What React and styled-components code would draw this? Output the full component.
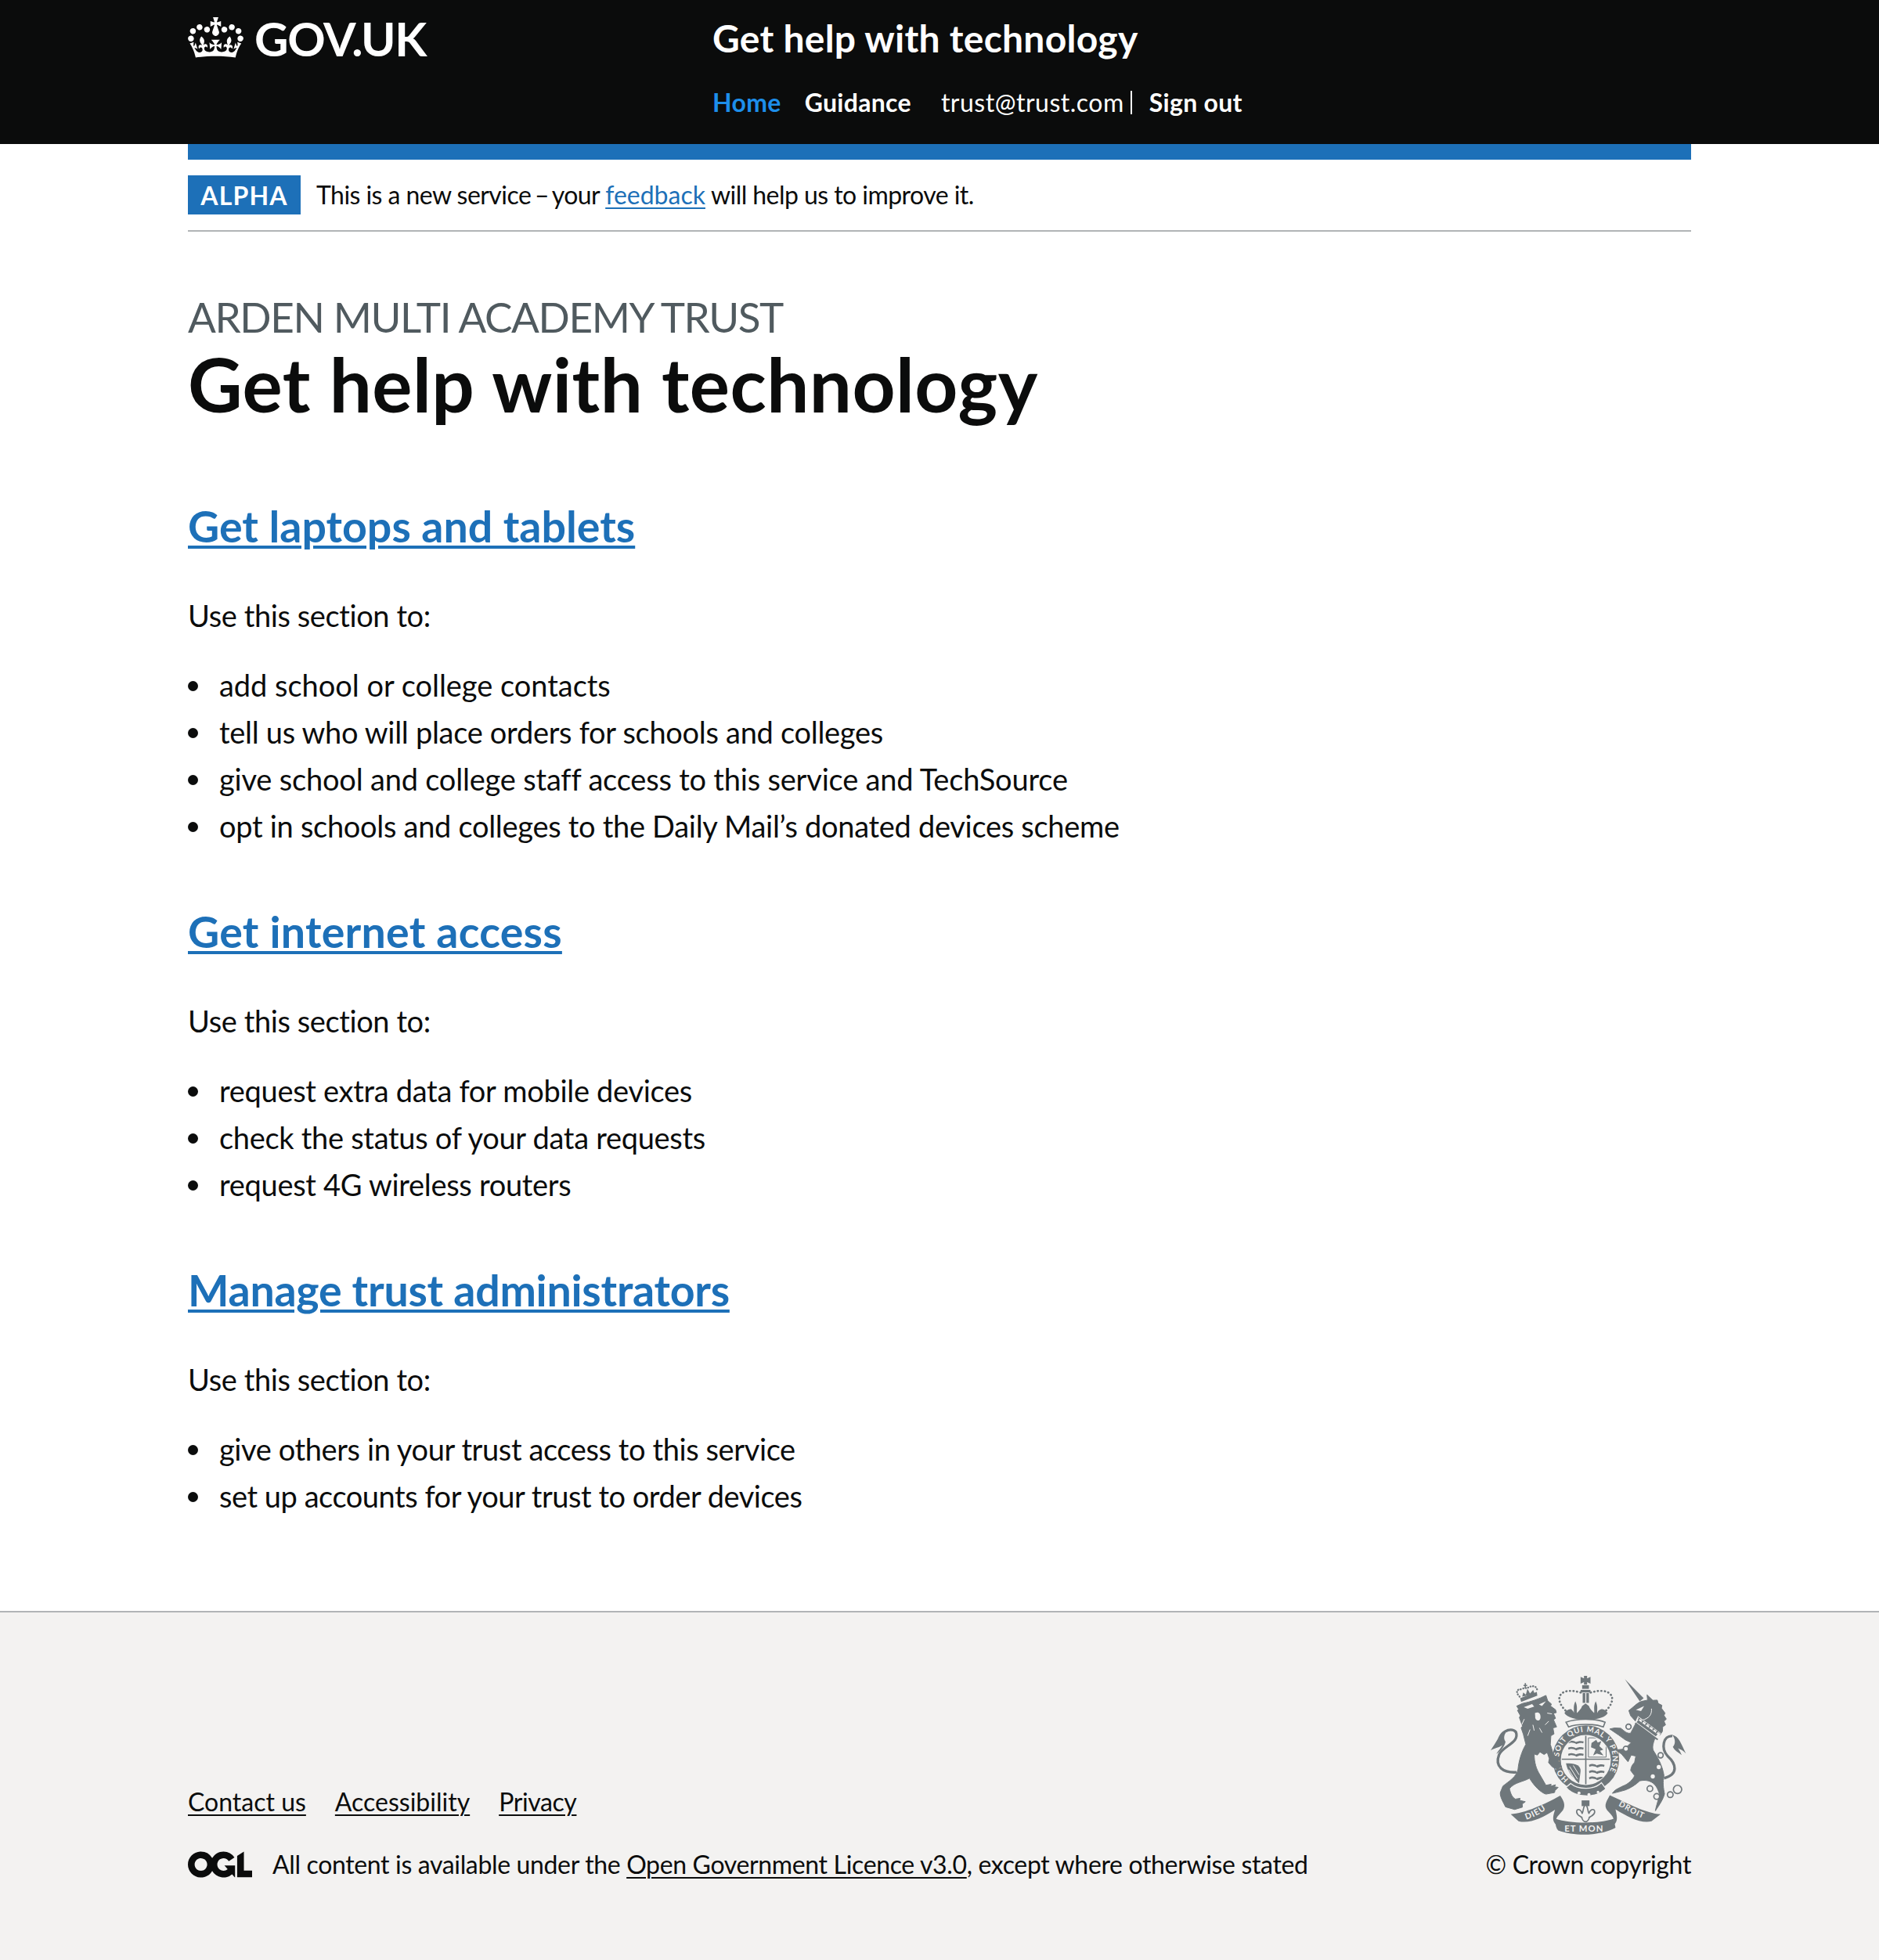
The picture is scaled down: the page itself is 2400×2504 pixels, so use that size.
import React from "react";
import styled, { createGlobalStyle } from "styled-components";

const FONT = `Lato, "Noto Sans", Arial, sans-serif`;

const Global = createGlobalStyle`
  html, body { margin: 0; padding: 0; background: #fff; }
  body { font-family: ${FONT}; color: #0b0c0c; }
`;

const Page = styled.div`
  width: 2400px;
  height: 2504px;
  display: flex;
  flex-direction: column;
`;
const Width = styled.div`
  width: 1920px;
  margin: 0 auto;
`;
const Header = styled.header`
  background: #0b0c0c;
  height: 184px;
  color: #fff;
`;
const HeaderInner = styled(Width)`
  display: flex;
`;
const Logo = styled.div`
  width: 670px;
  display: flex;
  align-items: flex-start;
  gap: 14px;
  padding-top: 22px;
`;
const LogoText = styled.span`
  font-size: 60px;
  font-weight: 700;
  line-height: 54px;
  letter-spacing: -1.3px;
`;
const HeaderRight = styled.div`
  display: flex;
  flex-direction: column;
`;
const ServiceName = styled.div`
  font-size: 48px;
  font-weight: 700;
  line-height: 60px;
  margin-top: 19px;
  letter-spacing: 0.25px;
`;
const Nav = styled.nav`
  display: flex;
  align-items: center;
  margin-top: 32px;
  font-size: 32px;
  line-height: 40px;
`;
const NavLink = styled.a`
  font-weight: 700;
  letter-spacing: 0.3px;
  color: ${(p) => (p.$active ? "#1d8feb" : "#fff")};
  margin-right: ${(p) => p.$mr || 0}px;
`;
const NavUser = styled.span`
  font-weight: 400;
  letter-spacing: 0.5px;
  padding-right: 8px;
  margin-right: 22px;
  border-right: 2px solid #fff;
  line-height: 30px;
`;
const Phase = styled(Width)`
  border-top: 20px solid #1d70b8;
  border-bottom: 2px solid #b1b4b6;
  padding: 20px 0;
  height: 50px;
  display: flex;
  align-items: center;
  gap: 20px;
`;
const Tag = styled.strong`
  background: #1d70b8;
  color: #fff;
  font-size: 32px;
  font-weight: 700;
  letter-spacing: 1.2px;
  width: 144px;
  height: 50px;
  display: flex;
  align-items: center;
  justify-content: center;
`;
const PhaseText = styled.span`
  font-size: 32px;
  line-height: 40px;
  letter-spacing: -0.55px;
`;
const Dash = styled.span`
  margin: 0 -3px;
`;
const Link = styled.a`
  color: #1d70b8;
  letter-spacing: 0;
  text-decoration: underline;
  text-decoration-thickness: 2px;
  text-underline-offset: 4px;
`;
const Main = styled(Width)`
  padding-top: 77px;
  flex: 1;
`;
const Caption = styled.div`
  font-size: 53px;
  line-height: 64px;
  margin-bottom: 3px;
  color: #505a5f;
  letter-spacing: -1.4px;
`;
const H1 = styled.h1`
  margin: 0 0 102px;
  font-size: 96px;
  line-height: 100px;
  font-weight: 700;
  letter-spacing: 0.45px;
`;
const H2 = styled.h2`
  margin: 0 0 59px;
  font-size: 55.5px;
  line-height: 60px;
  font-weight: 700;
  letter-spacing: ${(p) => p.$ls || 0}px;
`;
const H2Link = styled.a`
  color: #1d70b8;
  text-decoration: underline;
  text-decoration-thickness: 4px;
  text-underline-offset: 4px;
`;
const P = styled.p`
  margin: 0 0 39px;
  font-size: 38px;
  line-height: 50px;
  letter-spacing: -0.4px;
`;
const List = styled.ul`
  list-style: none;
  margin: 0 0 80px;
  padding: 0 0 0 40px;
  font-size: 38px;
  line-height: 50px;
`;
const Item = styled.li`
  display: flex;
  align-items: center;
  margin-bottom: 10px;
  letter-spacing: ${(p) => p.$ls}px;
  &::before {
    content: "";
    flex: none;
    width: 13px;
    height: 13px;
    border-radius: 50%;
    background: #0b0c0c;
    margin: 2px 27px 0 -40px;
  }
`;
const Footer = styled.footer`
  background: #f3f2f1;
  border-top: 2px solid #b1b4b6;
  height: 444px;
`;
const FooterInner = styled(Width)`
  display: flex;
  justify-content: space-between;
  align-items: flex-end;
  padding-top: 80px;
`;
const FooterMeta = styled.div`
  font-size: 32px;
  line-height: 40px;
`;
const FooterLinks = styled.div`
  display: flex;
  gap: 37px;
  margin-bottom: 40px;
`;
const FooterLink = styled.a`
  color: #0b0c0c;
  letter-spacing: ${(p) => p.$ls || 0}px;
  text-decoration: underline;
  text-decoration-thickness: 2px;
  text-underline-offset: 4px;
`;
const Licence = styled.div`
  display: flex;
  align-items: center;
  gap: 26px;
  letter-spacing: -0.35px;
`;
const CrownCol = styled.div`
  display: flex;
  flex-direction: column;
  align-items: flex-end;
  font-size: 32px;
  line-height: 40px;
  letter-spacing: -0.35px;
`;
const Crest = styled.svg`
  display: block;
  margin: 0 4px 15px 0;
`;

const CrownLogo = () => (
  <svg width="71" height="52" viewBox="0 0 132 97" aria-hidden="true">
    <path
      fill="#fff"
      fillRule="evenodd"
      d="M25 30.2c3.5 1.5 7.7-.2 9.1-3.7 1.5-3.6-.2-7.8-3.9-9.2-3.6-1.4-7.6.3-9.1 3.9-1.4 3.5.3 7.5 3.9 9zM9 39.5c3.6 1.5 7.8-.2 9.2-3.7 1.5-3.6-.2-7.8-3.9-9.1-3.6-1.5-7.6.2-9.1 3.8-1.4 3.5.3 7.5 3.8 9zM4.4 57.2c3.5 1.5 7.7-.2 9.1-3.8 1.5-3.6-.2-7.7-3.9-9.1-3.5-1.5-7.6.3-9.1 3.8-1.4 3.5.3 7.6 3.9 9.1zm38.3-21.4c3.5 1.5 7.7-.2 9.1-3.8 1.5-3.6-.2-7.7-3.9-9.1-3.6-1.5-7.6.3-9.1 3.8-1.3 3.6.4 7.7 3.9 9.1zm64.4-5.6c-3.6 1.5-7.8-.2-9.1-3.7-1.5-3.6.2-7.8 3.8-9.2 3.6-1.4 7.7.3 9.2 3.9 1.3 3.5-.4 7.5-3.9 9zm15.9 9.3c-3.6 1.5-7.7-.2-9.1-3.7-1.5-3.6.2-7.8 3.7-9.1 3.6-1.5 7.7.2 9.2 3.8 1.5 3.5-.3 7.5-3.8 9zm4.7 17.7c-3.6 1.5-7.8-.2-9.2-3.8-1.5-3.6.2-7.7 3.9-9.1 3.6-1.5 7.7.3 9.2 3.8 1.3 3.5-.4 7.6-3.9 9.1zM89.3 35.8c-3.6 1.5-7.8-.2-9.2-3.8-1.4-3.6.2-7.7 3.9-9.1 3.6-1.5 7.7.3 9.2 3.8 1.4 3.6-.3 7.7-3.9 9.1zM69.7 17.7l8.9 4.7V9.3l-8.9 2.8c-.2-.3-.5-.6-.9-.9L72.4 0H59.6l3.5 11.2c-.3.3-.6.5-.9.9l-8.8-2.8v13.1l8.8-4.7c.3.3.6.7.9.9l-5 15.4v.1c-.2.8-.4 1.6-.4 2.4 0 4.1 3.1 7.5 7 8.1h.2c.3 0 .7.1 1 .1.4 0 .7 0 1-.1h.2c4-.6 7.1-4.1 7.1-8.1 0-.8-.1-1.7-.4-2.4V34l-5.1-15.4c.4-.2.7-.6 1-.9zM66 92.8c16.9 0 32.8 1.1 47.1 3.2 4-16.9 8.9-26.7 14-33.5l-9.6-3.4c1 4.9 1.1 7.2 0 10.2-1.5-1.4-3-4.3-4.2-8.7L108.6 76c2.8-2 5-3.2 7.5-3.3-4.4 9.4-10 11.9-13.6 11.2-4.3-.8-6.3-4.6-5.6-7.9 1-4.7 5.7-5.9 8-.5 4.3-8.7-3-11.4-7.6-8.8 7.1-7.2 7.9-13.5 2.1-21.1-8 6.1-8.1 12.3-4.5 20.8-4.7-5.4-12.1-2.5-9.5 6.2 3.4-5.2 7.9-2 7.2 3.1-.6 4.3-6.4 7.8-13.5 7.2-10.3-.9-10.9-8-11.2-13.8 2.5-.5 7.1 1.8 11 7.3L80.2 60c-4.1 4.4-8 5.3-12.3 5.4 1.4-4.4 8-11.6 8-11.6H55.5s6.4 7.2 7.9 11.6c-4.2-.1-8-1-12.3-5.4l1.4 16.4c3.9-5.5 8.5-7.7 10.9-7.3-.3 5.8-.9 12.8-11.1 13.8-7.2.6-12.9-2.9-13.5-7.2-.7-5 3.8-8.3 7.1-3.1 2.7-8.7-4.6-11.6-9.4-6.2 3.7-8.5 3.6-14.7-4.6-20.8-5.8 7.6-5 13.9 2.2 21.1-4.7-2.6-11.9.1-7.7 8.8 2.3-5.5 7.1-4.2 8.1.5.7 3.3-1.3 7.1-5.7 7.9-3.5.7-9-1.8-13.5-11.2 2.5.1 4.7 1.3 7.5 3.3l-4.7-15.4c-1.2 4.4-2.7 7.2-4.3 8.7-1.1-3-.9-5.3 0-10.2l-9.5 3.4c5 6.9 9.9 16.7 14 33.5 14.8-2.1 30.8-3.2 47.7-3.2z"
    />
  </svg>
);

const OglLogo = () => (
  <svg width="82" height="34" viewBox="0 0 483.2 195.7" aria-hidden="true">
    <path
      fill="#0b0c0c"
      d="M421.5 142.8V.1l-50.7 32.3v161.1h112.4v-50.7zm-122.3-9.6A47.12 47.12 0 0 1 221 97.8c0-26 21.1-47.1 47.1-47.1 16.7 0 31.4 8.7 39.7 21.8l42.7-27.2A97.63 97.63 0 0 0 268.1 0c-36.5 0-68.3 20.1-85.1 49.7A98 98 0 0 0 97.8 0C43.9 0 0 43.9 0 97.8s43.9 97.8 97.8 97.8c36.5 0 68.3-20.1 85.1-49.7a97.76 97.76 0 0 0 149.6 25.4l19.4 22.2h3v-87.8h-80l24.3 27.5zM97.8 145c-26 0-47.1-21.1-47.1-47.1s21.1-47.1 47.1-47.1 47.2 21 47.2 47S123.8 145 97.8 145"
    />
  </svg>
);

const G = "#6f777b";
const BG = "#f3f2f1";

const Ring = ({ x, y, r = 10 }) => <circle cx={x} cy={y} r={r} fill={BG} stroke={G} strokeWidth="5" />;
const Dot = ({ x, y, r = 8, fill = BG }) => <circle cx={x} cy={y} r={r} fill={fill} />;
const Beast = ({ d }) => <path d={d} fill={G} stroke={G} strokeWidth="3" strokeLinejoin="round" />;

const Lions = ({ x, y }) => (
  <path
    transform={`translate(${x} ${y})`}
    d="M2 6 C12 0 24 2 32 8 C40 4 52 2 62 6 L60 13 C50 10 42 12 34 16 C24 10 12 8 4 13Z"
    fill={G}
  />
);

const CrestArt = () => (
  <Crest width="253" height="207" viewBox="70 60 760 620" aria-hidden="true">
    <defs>
      <path id="garter" d="M372 459 A103 103 0 1 1 504 459" />
      <path id="scrollL" d="M205 615 C240 605 275 585 305 558" />
      <path id="scrollR" d="M553 556 C590 572 630 602 672 614" />
      <clipPath id="field">
        <circle cx="438" cy="385" r="93" />
      </clipPath>
    </defs>

    {/* royal crown */}
    <path d="M431 62 H443 V72 L456 66 V92 L443 86 V96 H431 V86 L418 92 V66 L431 72Z" fill={G} />
    <path d="M424 98 H450 V112 H424Z" fill={G} />
    <path d="M426 128 H436 V166 H426Z M440 128 H450 V166 H440Z" fill={G} />
    <path d="M418 116 H456 V126 H418Z" fill={G} />
    <path
      d="M360 195 C330 165 325 130 365 121 C390 117 410 124 425 128 M516 195 C546 165 550 130 510 121 C485 117 465 124 450 128"
      fill="none"
      stroke={G}
      strokeWidth="8"
      strokeLinecap="round"
      strokeDasharray="1 12.5"
    />
    <path
      d="M356 205 C362 195 372 188 382 190 C388 196 392 200 392 205 C394 192 388 182 398 160 C408 182 402 192 404 205 C412 196 420 190 424 178 L437 168 L450 178 C454 190 462 196 470 205 C472 192 466 182 476 160 C486 182 480 192 482 205 C484 198 490 192 498 190 C508 188 516 196 522 205 C505 240 375 240 356 205Z"
      fill={G}
    />

    {/* garter + shield */}
    <circle cx="438" cy="380" r="128" fill={G} />
    <circle cx="438" cy="385" r="96" fill={BG} />
    <g clipPath="url(#field)">
      <path d="M438 285 V490 M345 382 H530" stroke={G} strokeWidth="5" />
      <Lions x={368} y={308} />
      <Lions x={368} y={332} />
      <Lions x={368} y={356} />
      <path d="M448 300 H516 V374 H448Z" fill="none" stroke={G} strokeWidth="3" />
      <path d="M460 320 L478 308 L484 318 L498 312 L490 332 L505 345 L492 350 L506 368 L480 360 L466 368 L476 344 L458 336Z" fill={G} />
      <path d="M362 398 C395 395 420 405 418 428 L412 475 C385 450 368 430 362 398Z" fill={G} />
      <path d="M376 410 L406 458 M390 406 L412 442 M372 422 L396 460" stroke={BG} strokeWidth="3" />
      <Lions x={448} y={398} />
      <Lions x={448} y={422} />
      <Lions x={448} y={446} />
    </g>
    <text fontSize="29" fontWeight="700" fill={BG} fontFamily={FONT}>
      <textPath href="#garter" textLength="462" lengthAdjust="spacing">HONI SOIT QUI MAL Y PENSE</textPath>
    </text>

    {/* cap of the crown, over the garter */}
    <path d="M362 240 C400 225 476 225 512 240 L505 258 C470 245 405 245 372 258Z" fill={BG} stroke={G} strokeWidth="5" />

    {/* buckle */}
    <path d="M362 490 C395 530 475 535 515 495 L498 472 C470 500 410 500 380 475 Z" fill={G} stroke={BG} strokeWidth="4" />
    <Dot x={412} y={512} r={6} />
    <Dot x={450} y={518} r={6} />
    <Dot x={485} y={508} r={5} />

    {/* lion tail */}
    <path
      d="M172 432 C120 435 88 410 105 365 C120 330 185 320 170 278 C160 265 140 268 130 275"
      fill="none"
      stroke={G}
      strokeWidth="10"
    />
    <path d="M140 268 C118 270 108 285 100 305 C92 318 82 335 73 348 C90 338 105 338 118 328 C108 345 100 352 95 362 C112 350 125 335 130 315 C120 300 125 285 140 268Z" fill={G} />

    {/* lion crown */}
    <path d="M190 162 L252 138 L250 124 L186 148Z" fill={G} />
    <path
      d="M184 142 C168 125 172 112 192 114 C200 108 208 108 212 110 C225 100 250 95 252 120"
      fill="none"
      stroke={G}
      strokeWidth="7"
      strokeLinecap="round"
      strokeDasharray="1 9"
    />
    <path d="M199 99 H213 M206 90 V110" stroke={G} strokeWidth="5" />
    <path d="M194 142 L198 126 L208 134 L214 112 L224 130 L236 116 L242 132Z" fill={G} />

    {/* lion body */}
    <Beast d="M173 178 L195 168 C225 162 260 150 285 137 L292 158 L306 170 L303 178 L322 192 L325 203 L314 206 L322 225 L314 230 L326 258 L312 262 L316 285 L304 292 L302 325 L312 358 L335 392 L345 410 L330 420 L310 412 L295 395 L298 380 L290 356 L278 364 L262 354 L252 366 L240 362 C240 395 248 420 262 442 L285 482 L305 478 L303 486 L322 480 L318 488 L332 490 L320 502 L318 510 L285 516 C265 510 240 485 222 455 C195 470 165 470 145 495 C150 515 155 528 168 535 L186 532 L184 540 L206 545 L194 554 L195 566 L165 575 L130 565 C120 545 108 525 110 510 L120 485 C145 465 172 450 178 420 C180 395 190 355 208 325 L198 285 L190 262 L195 255 L183 222 L187 215 L176 195 L180 190Z" />
    <path d="M200 182 L232 170 L240 180 L215 188Z M258 172 L285 160 L270 178Z" fill={BG} />
    <path d="M243 205 C255 198 266 205 264 224 C260 238 246 236 244 222Z" fill={BG} />
    <path d="M192 250 L202 228 M215 292 L224 268 M282 250 L296 236 M290 205 L308 208 M260 262 L270 280 M235 250 L240 272" stroke={BG} strokeWidth="3" />

    {/* unicorn */}
    <path d="M588 75 L660 148 L645 160Z" fill={G} />
    <Beast d="M603 195 C618 185 635 165 652 160 L675 155 L673 135 L695 156 L712 155 L716 168 L730 175 L728 186 L742 205 L738 214 L747 228 L738 236 L744 250 L733 258 L732 275 L722 290 L702 305 C695 325 692 338 698 350 C712 372 732 405 738 445 C732 470 736 495 740 515 C735 535 722 555 705 580 C708 560 720 530 720 515 C715 495 705 478 690 470 C675 462 660 462 645 465 C630 480 610 492 590 500 L565 507 L540 513 C548 500 560 495 580 485 C600 478 620 460 625 445 L610 425 C612 410 618 400 625 395 L630 370 L612 366 L600 392 L575 362 L552 346 L578 344 L598 332 L612 318 L590 308 L565 290 L530 266 L548 262 L572 263 C585 272 595 285 610 282 L632 240 L618 224 L610 215Z" />
    <path d="M630 193 L662 178 L650 197Z" fill={BG} />
    <path d="M690 188 C692 212 680 225 655 232" stroke={BG} strokeWidth="3" fill="none" />
    <path d="M627 241 L638 216 L726 282 L714 306Z" fill={BG} />
    <path d="M628 243 L714 307" stroke={G} strokeWidth="6" />
    <path d="M636 220 L724 284" stroke={G} strokeWidth="2" />
    <path d="M636 236 L710 290" stroke={G} strokeWidth="11" />
    <path d="M640 226 L718 282" stroke={G} strokeWidth="10" strokeDasharray="5 12" />

    {/* unicorn tail */}
    <path d="M738 455 C795 440 785 400 752 370 C725 340 735 290 770 293" fill="none" stroke={G} strokeWidth="10" />
    <path d="M770 288 C795 295 803 320 822 360 C808 345 800 345 792 340 C800 352 802 358 806 366 C790 355 778 348 772 335 C785 320 780 303 770 288Z" fill={G} />

    <Ring x={602} y={257} />
    <Ring x={592} y={342} />
    <Ring x={725} y={367} />
    <Dot x={718} y={412} />
    <Dot x={695} y={448} />
    <Ring x={684} y={495} r={11} />
    <Ring x={710} y={525} r={11} />
    <Ring x={762} y={518} r={11} />
    <Ring x={790} y={498} r={16} />

    {/* motto ribbons */}
    <path
      d="M150 593 C205 590 280 555 340 522 C352 540 362 558 350 578 C335 598 316 606 326 635 C305 620 314 595 320 576 C270 610 220 630 180 620Z"
      fill={G}
    />
    <path
      d="M725 593 C670 590 600 552 530 520 C520 540 505 558 520 578 C535 595 552 606 544 635 C565 620 556 595 552 574 C600 604 650 630 690 620Z"
      fill={G}
    />
    <path d="M322 610 C380 630 490 630 545 610 L552 645 C490 678 395 678 332 655 C322 645 320 625 322 610Z" fill={G} />
    <text fontSize="32" fontWeight="700" fill={BG} fontFamily={FONT} letterSpacing="3">
      <textPath href="#scrollL" startOffset="4%">DIEU</textPath>
    </text>
    <text x="356" y="659" fontSize="34" fontWeight="700" fill={BG} fontFamily={FONT} letterSpacing="3">ET MON</text>
    <text fontSize="30" fontWeight="700" fill={BG} fontFamily={FONT} letterSpacing="3">
      <textPath href="#scrollR" startOffset="8%">DROIT</textPath>
    </text>

    {/* fleur de lis */}
    <path d="M422 540 H452 V562 H422Z" fill={G} />
    <path
      d="M437 555 C425 568 430 582 424 590 C418 572 402 570 403 585 C405 600 420 600 428 610 L446 610 C454 600 470 600 472 585 C473 570 456 572 450 590 C444 582 449 568 437 555Z"
      fill={BG}
      stroke={G}
      strokeWidth="5"
      strokeLinejoin="round"
    />
    <path d="M422 604 C428 628 446 628 452 604" fill={BG} stroke={G} strokeWidth="5" />
  </Crest>
);

const Section = ({ title, ls, items }) => (
  <>
    <H2 $ls={ls}>
      <H2Link href="#">{title}</H2Link>
    </H2>
    <P>Use this section to:</P>
    <List>
      {items.map(([t, s = -0.3]) => (
        <Item key={t} $ls={s}>{t}</Item>
      ))}
    </List>
  </>
);

export default function App() {
  return (
    <Page>
      <Global />
      <Header>
        <HeaderInner>
          <Logo>
            <CrownLogo />
            <LogoText>GOV.UK</LogoText>
          </Logo>
          <HeaderRight>
            <ServiceName>Get help with technology</ServiceName>
            <Nav>
              <NavLink $active $mr={30}>Home</NavLink>
              <NavLink $mr={38}>Guidance</NavLink>
              <NavUser>trust@trust.com</NavUser>
              <NavLink>Sign out</NavLink>
            </Nav>
          </HeaderRight>
        </HeaderInner>
      </Header>
      <Phase>
        <Tag>ALPHA</Tag>
        <PhaseText>
          This is a new service <Dash>–</Dash> your <Link href="#">feedback</Link> will help us to improve it.
        </PhaseText>
      </Phase>
      <Main>
        <Caption>ARDEN MULTI ACADEMY TRUST</Caption>
        <H1>Get help with technology</H1>
        <Section
          title="Get laptops and tablets"
          items={[
            ["add school or college contacts", -0.03],
            ["tell us who will place orders for schools and colleges"],
            ["give school and college staff access to this service and TechSource", -0.2],
            ["opt in schools and colleges to the Daily Mail’s donated devices scheme"],
          ]}
        />
        <Section
          title="Get internet access"
          ls={0.25}
          items={[
            ["request extra data for mobile devices"],
            ["check the status of your data requests"],
            ["request 4G wireless routers"],
          ]}
        />
        <Section
          title="Manage trust administrators"
          ls={-0.25}
          items={[
            ["give others in your trust access to this service", -0.4],
            ["set up accounts for your trust to order devices", -0.47],
          ]}
        />
      </Main>
      <Footer>
        <FooterInner>
          <FooterMeta>
            <FooterLinks>
              <FooterLink href="#">Contact us</FooterLink>
              <FooterLink href="#">Accessibility</FooterLink>
              <FooterLink href="#" $ls={-0.4}>Privacy</FooterLink>
            </FooterLinks>
            <Licence>
              <OglLogo />
              <span>
                All content is available under the <FooterLink href="#" $ls={-0.35}>Open Government Licence v3.0</FooterLink>, except where otherwise stated
              </span>
            </Licence>
          </FooterMeta>
          <CrownCol>
            <CrestArt />
            <span>© Crown copyright</span>
          </CrownCol>
        </FooterInner>
      </Footer>
    </Page>
  );
}
